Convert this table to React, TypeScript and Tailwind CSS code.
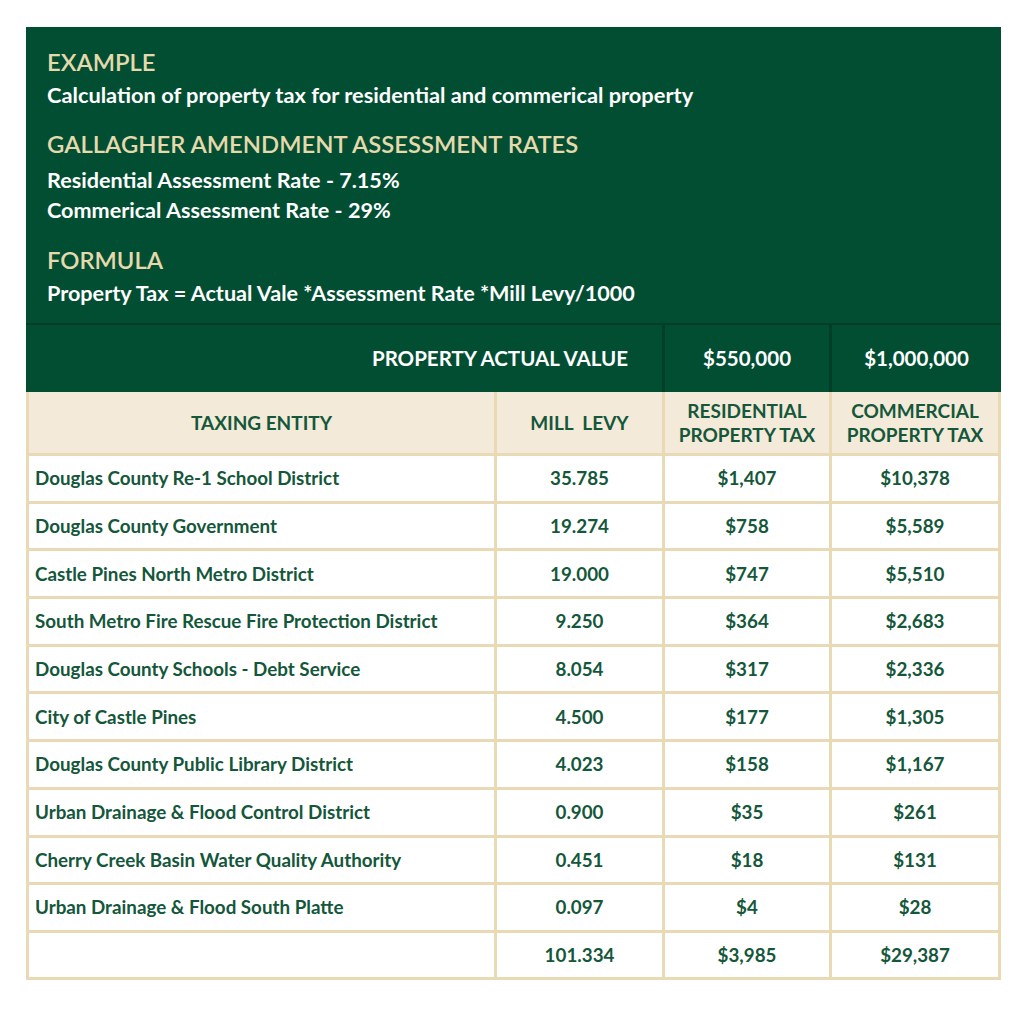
const rows = [
  ["Douglas County Re-1 School District", "35.785", "$1,407", "$10,378"],
  ["Douglas County Government", "19.274", "$758", "$5,589"],
  ["Castle Pines North Metro District", "19.000", "$747", "$5,510"],
  ["South Metro Fire Rescue Fire Protection District", "9.250", "$364", "$2,683"],
  ["Douglas County Schools - Debt Service", "8.054", "$317", "$2,336"],
  ["City of Castle Pines", "4.500", "$177", "$1,305"],
  ["Douglas County Public Library District", "4.023", "$158", "$1,167"],
  ["Urban Drainage & Flood Control District", "0.900", "$35", "$261"],
  ["Cherry Creek Basin Water Quality Authority", "0.451", "$18", "$131"],
  ["Urban Drainage & Flood South Platte", "0.097", "$4", "$28"],
];

const cell = "border-b-[3px] border-r-[3px] border-[#ead9b5]";

export default function App() {
  return (
    <div className="min-h-[1009px] bg-white pt-[27px] pl-[26px] font-['Lato','Liberation_Sans',sans-serif]">
      <div className="w-[975px]">
        {/* intro panel */}
        <div className="h-[298px] bg-[#024e33] px-[21px] pt-[20px] border-b-[2px] border-[#013e28]">
          <h2 className="text-[23.8px] leading-[30px] font-semibold text-[#e6d9ac]">EXAMPLE</h2>
          <p className="mt-[3px] text-[21.8px] leading-[30px] font-bold text-white">
            Calculation of property tax for residential and commerical property
          </p>
          <h2 className="mt-[19px] text-[23.8px] leading-[30px] font-semibold text-[#e6d9ac]">
            GALLAGHER AMENDMENT ASSESSMENT RATES
          </h2>
          <p className="mt-[6px] text-[21.6px] leading-[30px] font-bold text-white">
            Residential Assessment Rate - 7.15%
          </p>
          <p className="text-[21.6px] leading-[30px] font-bold text-white">
            Commerical Assessment Rate - 29%
          </p>
          <h2 className="mt-[20px] text-[23.8px] leading-[30px] font-semibold text-[#e6d9ac]">FORMULA</h2>
          <p className="mt-[3px] text-[21.6px] leading-[30px] font-bold text-white">
            Property Tax = Actual Vale *Assessment Rate *Mill Levy/1000
          </p>
        </div>

        <table className="w-full border-separate border-spacing-0 table-fixed text-[18.8px] font-bold text-[#14573a]">
          <colgroup>
            <col className="w-[471px]" />
            <col className="w-[168px]" />
            <col className="w-[167px]" />
            <col className="w-[169px]" />
          </colgroup>
          <thead>
            <tr className="h-[67px] bg-[#024e33] text-white text-[20.5px]">
              <th colSpan={2} className="text-right pr-[34px] font-bold border-r-[3px] border-[#013e28]">
                PROPERTY ACTUAL VALUE
              </th>
              <th className="font-bold border-r-[3px] border-[#013e28]">$550,000</th>
              <th className="font-bold">$1,000,000</th>
            </tr>
            <tr className="h-[64px] bg-[#f4ead9] text-[19px] leading-[24px]">
              <th className={`font-bold border-l-[3px] ${cell}`}>TAXING ENTITY</th>
              <th className={`font-bold ${cell}`}>MILL&nbsp; LEVY</th>
              <th className={`font-bold ${cell}`}>
                RESIDENTIAL
                <br />
                PROPERTY TAX
              </th>
              <th className={`font-bold ${cell}`}>
                COMMERCIAL
                <br />
                PROPERTY TAX
              </th>
            </tr>
          </thead>
          <tbody>
            {rows.map((r) => (
              <tr key={r[0]} className="h-[47.7px]">
                <td className={`pl-[6px] border-l-[3px] ${cell}`}>{r[0]}</td>
                <td className={`text-center ${cell}`}>{r[1]}</td>
                <td className={`text-center ${cell}`}>{r[2]}</td>
                <td className={`text-center ${cell}`}>{r[3]}</td>
              </tr>
            ))}
            <tr className="h-[47px]">
              <td className={`border-l-[3px] ${cell}`}></td>
              <td className={`text-center ${cell}`}>101.334</td>
              <td className={`text-center ${cell}`}>$3,985</td>
              <td className={`text-center ${cell}`}>$29,387</td>
            </tr>
          </tbody>
        </table>
      </div>
    </div>
  );
}
